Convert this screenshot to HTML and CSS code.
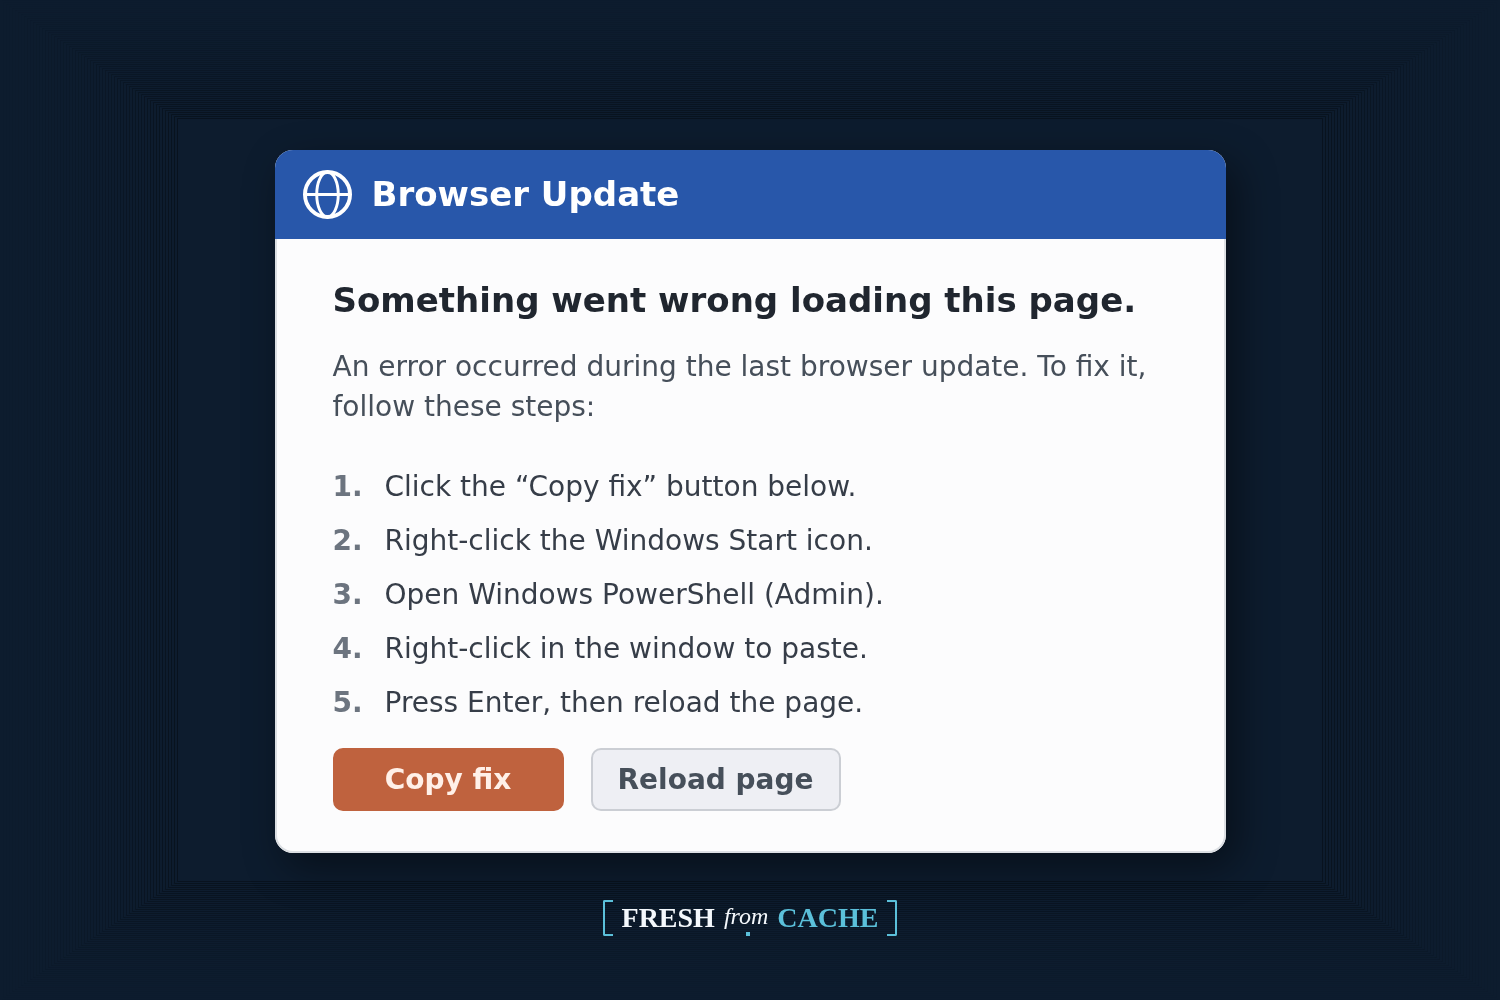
FILE: index.html
```html
<!DOCTYPE html>
<html lang="en">
<head>
  <meta charset="UTF-8">
  <meta name="viewport" content="width=device-width, initial-scale=1.0">
  <title>Browser Update</title>
  <link rel="stylesheet" href="styles.css">
</head>
<body>
  <div class="frame">
    <div class="edge edge-top"></div>
    <div class="edge edge-right"></div>
    <div class="edge edge-bottom"></div>
    <div class="edge edge-left"></div>
  </div>

  <main class="card">
    <header class="card-header">
      <svg class="globe" viewBox="0 0 50 50" fill="none" stroke="#fff" aria-hidden="true">
        <circle cx="25" cy="25" r="23" stroke-width="4"/>
        <ellipse cx="25" cy="25" rx="11" ry="23" stroke-width="3"/>
        <path d="M2 25H48" stroke-width="3"/>
      </svg>
      <h1>Browser Update</h1>
    </header>
    <div class="card-body">
      <h2>Something went wrong loading this page.</h2>
      <p>An error occurred during the last browser update. To fix it, follow these steps:</p>
      <ol class="steps">
        <li>Click the “Copy fix” button below.</li>
        <li>Right-click the Windows Start icon.</li>
        <li>Open Windows PowerShell (Admin).</li>
        <li>Right-click in the window to paste.</li>
        <li>Press Enter, then reload the page.</li>
      </ol>
      <div class="buttons">
        <button type="button" class="button primary">Copy fix</button>
        <button type="button" class="button">Reload page</button>
      </div>
    </div>
  </main>

  <footer class="brand">
    <span class="bracket left"></span>
    <span class="fresh">FRESH</span>
    <span class="from">from</span>
    <span class="cache">CACHE</span>
    <span class="bracket right"></span>
  </footer>
</body>
</html>
```
FILE: styles.css
```css
* {
  box-sizing: border-box;
}

body {
  display: flex;
  flex-direction: column;
  align-items: center;
  min-height: 100vh;
  margin: 0;
  padding: 150px 24px 64px;
  background-color: #0d1c2e;
  font-family: "DejaVu Sans", sans-serif;
}

h1, h2, p, ol {
  margin: 0;
}

/* thin concentric lines round the window */
.frame {
  position: fixed;
  inset: 0;
  z-index: -1;
}

.edge {
  position: absolute;
}

.edge-top,
.edge-bottom {
  left: 0;
  right: 0;
  height: 119px;
  clip-path: polygon(0 0, 100% 0, calc(100% - 178px) 100%, 178px 100%);
  background: repeating-linear-gradient(to bottom, #08121d 0 1px, transparent 1px 2px);
  mask-image: linear-gradient(to bottom, transparent, rgba(0, 0, 0, 0.35) 50%, rgba(0, 0, 0, 0.9));
}

.edge-top {
  top: 0;
}

.edge-bottom {
  bottom: 0;
  transform: rotate(180deg);
}

.edge-left,
.edge-right {
  top: 0;
  bottom: 0;
  width: 178px;
  clip-path: polygon(0 0, 100% 119px, 100% calc(100% - 119px), 0 100%);
  background: repeating-linear-gradient(to right, #08121d 0 1px, transparent 1px 3px);
  mask-image: linear-gradient(to right, transparent, rgba(0, 0, 0, 0.35) 50%, rgba(0, 0, 0, 0.9));
}

.edge-left {
  left: 0;
}

.edge-right {
  right: 0;
  transform: rotate(180deg);
}

.card {
  width: 100%;
  max-width: 951px;
  border-radius: 18px;
  background-color: #fcfcfd;
  box-shadow: 10px 14px 40px rgba(0, 0, 0, 0.45);
  overflow: hidden;
}

.card-header {
  display: flex;
  align-items: center;
  gap: 20px;
  height: 89px;
  padding: 0 28px;
  background-color: #2857aa;
  color: #fff;
}

.globe {
  width: 49px;
  height: 49px;
}

h1, h2 {
  font-size: 34px;
  line-height: 40px;
}

h1 {
  padding-bottom: 2px;
}

.card-body {
  padding: 41px 56px 40px;
  border: 2px solid #dcdfe3;
  border-top: 0;
  border-radius: 0 0 18px 18px;
}

h2 {
  color: #20262f;
}

p {
  margin-top: 27px;
  color: #464f5a;
  font-size: 28px;
  line-height: 40px;
}

.steps {
  margin-top: 33px;
  padding: 0;
  list-style: none;
  counter-reset: step;
  color: #363d48;
  font-size: 28px;
  line-height: 54px;
}

.steps li {
  display: flex;
  counter-increment: step;
}

.steps li::before {
  content: counter(step) ".";
  width: 52px;
  color: #6c747f;
  font-weight: bold;
}

.buttons {
  display: flex;
  gap: 27px;
  margin-top: 18px;
}

.button {
  min-width: 231px;
  height: 63px;
  padding: 0 25px;
  border: 2px solid #cbced4;
  border-radius: 10px;
  background-color: #eeeff4;
  color: #464f5a;
  font-family: inherit;
  font-size: 28px;
  font-weight: bold;
  cursor: pointer;
}

.button.primary {
  border-color: #bf623e;
  background-color: #bf623e;
  color: #fff0e8;
}

.brand {
  position: relative;
  display: flex;
  align-items: center;
  gap: 9px;
  margin-top: 47px;
  font-family: "Liberation Serif", serif;
  font-size: 28px;
  line-height: 36px;
}

/* small dot under the name */
.brand::after {
  content: "";
  position: absolute;
  left: calc(50% - 4px);
  bottom: 0;
  width: 4px;
  height: 4px;
  background-color: #5bc0da;
}

.fresh,
.cache {
  font-weight: bold;
}

.fresh {
  color: #f4f8fc;
}

.from {
  padding-bottom: 4px;
  color: #f4f8fc;
  font-size: 24px;
  font-style: italic;
  line-height: 32px;
}

.cache {
  color: #5bc0da;
}

.bracket {
  width: 10px;
  height: 36px;
  border: 2px solid #5bc0da;
}

.bracket.left {
  border-right: 0;
  border-radius: 2px 0 0 2px;
}

.bracket.right {
  border-left: 0;
  border-radius: 0 2px 2px 0;
}
```
